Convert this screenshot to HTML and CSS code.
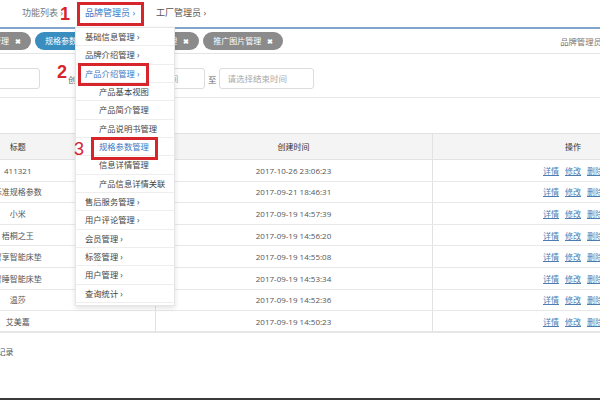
FILE: index.html
```html
<!DOCTYPE html>
<html lang="zh-CN">
<head>
<meta charset="utf-8">
<title>品牌管理员</title>
<link rel="stylesheet" href="styles.css">
</head>
<body>
<div class="page">
  <header class="topnav">
    <span class="crumb">功能列表 ›</span>
    <span class="crumb crumb-active">品牌管理员 ›</span>
    <span class="crumb crumb-dark">工厂管理员 ›</span>
  </header>

  <div class="tabbar">
    <div class="tabs">
      <span class="tab tab-first">产品管理 <b>✖</b></span>
      <span class="tab tab-blue">规格参数管理 <b>✖</b></span>
      <span class="tab">信息详情管理 <b>✖</b></span>
      <span class="tab">推广图片管理 <b>✖</b></span>
    </div>
    <span class="role">品牌管理员</span>
  </div>

  <div class="search">
    <span class="input input-first"></span>
    <span class="label">创建时间</span>
    <span class="input input-start">请选择开始时间</span>
    <span class="to">至</span>
    <span class="input input-end">请选择结束时间</span>
  </div>

  <table class="grid">
    <colgroup>
      <col class="c-title"><col class="c-time"><col class="c-op">
    </colgroup>
    <thead>
      <tr><th>标题</th><th>创建时间</th><th>操作</th></tr>
    </thead>
    <tbody>
      <tr><td>411321</td><td>2017-10-26 23:06:23</td><td><a>详情</a><a>修改</a><a>删除</a></td></tr>
      <tr><td>标准规格参数</td><td>2017-09-21 18:46:31</td><td><a>详情</a><a>修改</a><a>删除</a></td></tr>
      <tr><td>小米</td><td>2017-09-19 14:57:39</td><td><a>详情</a><a>修改</a><a>删除</a></td></tr>
      <tr><td>梧桐之王</td><td>2017-09-19 14:56:20</td><td><a>详情</a><a>修改</a><a>删除</a></td></tr>
      <tr><td>智享智能床垫</td><td>2017-09-19 14:55:08</td><td><a>详情</a><a>修改</a><a>删除</a></td></tr>
      <tr><td>智睡智能床垫</td><td>2017-09-19 14:53:34</td><td><a>详情</a><a>修改</a><a>删除</a></td></tr>
      <tr><td>温莎</td><td>2017-09-19 14:52:36</td><td><a>详情</a><a>修改</a><a>删除</a></td></tr>
      <tr><td>艾美嘉</td><td>2017-09-19 14:50:23</td><td><a>详情</a><a>修改</a><a>删除</a></td></tr>
    </tbody>
  </table>

  <div class="total">共8条记录</div>
  <div class="spacer"></div>
  <div class="bottombar"></div>

  <ul class="menu">
    <li class="m-top">基础信息管理 ›</li>
    <li class="m-top">品牌介绍管理 ›</li>
    <li class="m-top m-active">产品介绍管理 ›</li>
    <li class="m-sub">产品基本视图</li>
    <li class="m-sub">产品简介管理</li>
    <li class="m-sub">产品说明书管理</li>
    <li class="m-sub m-active">规格参数管理</li>
    <li class="m-sub">信息详情管理</li>
    <li class="m-sub">产品信息详情关联</li>
    <li class="m-top">售后服务管理 ›</li>
    <li class="m-top">用户评论管理 ›</li>
    <li class="m-top">会员管理 ›</li>
    <li class="m-top">标签管理 ›</li>
    <li class="m-top">用户管理 ›</li>
    <li class="m-top">查询统计 ›</li>
  </ul>

  <span class="mark box1"></span>
  <span class="mark box2"></span>
  <span class="mark box3"></span>
  <span class="num num1">1</span>
  <span class="num num2">2</span>
  <span class="num num3">3</span>
</div>
</body>
</html>
```

FILE: styles.css
```css
* { box-sizing: border-box; }
html, body { margin: 0; padding: 0; background: #fff; }
body {
  font-family: "Open Sans", "Noto Sans CJK SC", sans-serif;
  font-size: 8px;
  color: #555;
}
.page {
  position: relative;
  width: 600px;
  height: 400px;
  overflow: hidden;
  display: flex;
  flex-direction: column;
}

/* top breadcrumb */
.topnav {
  height: 29px;
  border-bottom: 2px solid #7fa5cc;
  display: flex;
  align-items: center;
  padding: 0 0 2px 22px;
}
.crumb { font-size: 9px; color: #777; line-height: 14px; white-space: nowrap; }
.crumb-active { color: #3b78c4; margin-left: 22px; }
.crumb-dark { color: #555; margin-left: 21px; }

/* tab bar */
.tabbar {
  height: 25px;
  border-bottom: 1px solid #e4e4e4;
  display: flex;
  align-items: center;
  justify-content: space-between;
}
.tabs { display: flex; align-items: center; gap: 4px; margin-left: -33px; }
.tab {
  height: 18px;
  line-height: 18px;
  padding: 0 10px;
  border-radius: 9px;
  background: #8b8b8b;
  color: #fff;
  font-size: 8px;
  white-space: nowrap;
}
.tab b { font-size: 7px; margin-left: 4px; }
.tab-blue { background: #3a8dbf; }
.role { font-size: 8.4px; color: #777; margin-right: -2px; white-space: nowrap; }

/* search row */
.search {
  height: 44px;
  border-bottom: 1px solid #e6e6e6;
  display: flex;
  align-items: center;
  padding-top: 6px;
}
.input {
  height: 21px;
  border: 1px solid #dcdcdc;
  border-radius: 3px;
  color: #aaa;
  font-size: 8.5px;
  line-height: 19px;
  padding-left: 8px;
  white-space: nowrap;
  overflow: hidden;
}
.input-first { width: 46px; margin-left: -6px; }
.label { margin-left: 28px; font-size: 8.5px; color: #666; width: 42px; white-space: nowrap; }
.input-start { width: 95px; }
.to { margin: 0 2px 0 3px; color: #666; font-size: 8.5px; }
.input-end { width: 95px; }

/* table */
.grid {
  margin-top: 35px;
  margin-left: -119px;
  width: 833px;
  border-collapse: collapse;
  table-layout: fixed;
  border-top: 1px solid #e2e2e2;
  border-bottom: 2px solid #e6e6e6;
}
.c-title { width: 274px; }
.c-time { width: 277px; }
.c-op { width: 282px; }
.grid th {
  height: 26px;
  background: #f4f4f4;
  font-weight: normal;
  color: #333;
  font-size: 8px;
  border-right: 1px solid #e2e2e2;
  border-bottom: 1px solid #e2e2e2;
}
.grid td {
  height: 21.6px;
  padding: 0;
  text-align: center;
  font-size: 8px;
  color: #555;
  border-bottom: 1px solid #e8e8e8;
  border-right: 1px solid #e2e2e2;
  white-space: nowrap;
}
.grid td a {
  color: #4d7db0;
  text-decoration: underline;
  margin: 0 3px;
  font-size: 8px;
}

.total { margin-top: 13px; margin-left: -23px; font-size: 8px; color: #555; white-space: nowrap; }
.spacer { flex: 1; }
.bottombar { height: 2px; background: #3b3b3b; }

/* dropdown */
.menu {
  position: absolute;
  left: 75px;
  top: 27px;
  width: 100px;
  margin: 0;
  padding: 0 0 2px;
  list-style: none;
  background: #fff;
  border: 1px solid #e6e6e6;
  box-shadow: 0 2px 5px rgba(0,0,0,0.12);
}
.menu li {
  height: 18.35px;
  line-height: 17.35px;
  border-bottom: 1px solid #eee;
  font-size: 8.3px;
  color: #444;
  white-space: nowrap;
}
.m-top { padding-left: 9px; }
.m-sub { padding-left: 23px; }
.menu .m-active { color: #3b78c4; }

/* annotations */
.mark {
  position: absolute;
  border: 3px solid #d7262b;
}
.box1 { left: 77px; top: 2px; width: 67px; height: 24px; }
.box2 { left: 78px; top: 63px; width: 71px; height: 23px; }
.box3 { left: 91px; top: 137px; width: 67px; height: 23px; }
.num {
  position: absolute;
  color: #d7262b;
  font-family: "Liberation Sans", sans-serif;
  font-size: 18px;
  line-height: 20px;
}
.num1 { left: 60px; top: 4px; font-weight: bold; }
.num2 { left: 57px; top: 62px; font-weight: bold; }
.num3 { left: 74px; top: 139px; }
```
